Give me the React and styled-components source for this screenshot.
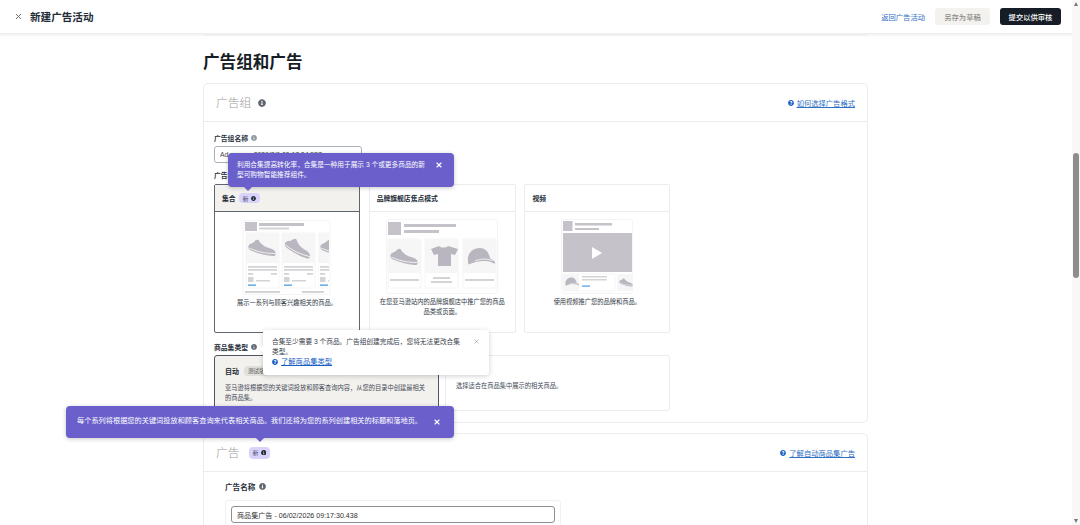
import React from "react"
import styled, { createGlobalStyle } from "styled-components"
import { FaInfoCircle, FaQuestionCircle } from "react-icons/fa"
import { X } from "lucide-react"

const GlobalStyle = createGlobalStyle`
  html, body {
    margin: 0;
    padding: 0;
    height: 100%;
    overflow: hidden;
    background: #fff;
  }
  body {
    font-family: "Liberation Sans", "Noto Sans CJK SC", sans-serif;
    color: #161d26;
  }
`

const Page = styled.div`
  position: relative;
  display: flex;
  width: 1080px;
  height: 525px;
  overflow: hidden;
`

const Content = styled.div`
  width: 1072px;
  height: 525px;
  overflow: hidden;
`

const Track = styled.div`
  position: relative;
  width: 8px;
  height: 525px;
  background: #f8f8f8;
`

const Thumb = styled.div`
  position: absolute;
  top: 153px;
  left: 1px;
  width: 6px;
  height: 125px;
  border-radius: 3px;
  background: #8d8d8d;
`

const Arrow = styled.div`
  position: absolute;
  left: 1.5px;
  ${({ $down }) => ($down ? "bottom: 2px;" : "top: 2px;")}
  width: 0;
  height: 0;
  border-left: 2.5px solid transparent;
  border-right: 2.5px solid transparent;
  ${({ $down }) =>
    $down ? "border-top: 4px solid #777;" : "border-bottom: 4px solid #777;"}
`

const Header = styled.header`
  display: flex;
  align-items: center;
  height: 33px;
  padding: 0 11px 0 14px;
  box-sizing: border-box;
  background: #fff;
`

const HeaderTitle = styled.h1`
  margin: 0 0 0 7px;
  font-size: 10.6px;
  font-weight: 700;
  color: #232b37;
`

const HeaderActions = styled.div`
  display: flex;
  align-items: center;
  margin-left: auto;
`

const BackLink = styled.a`
  margin-right: 10px;
  font-size: 7.3px;
  color: #2f6fc4;
`

const HeaderButton = styled.button`
  height: 17px;
  padding: 0;
  width: ${({ $w }) => $w}px;
  margin-left: ${({ $gap }) => $gap || 0}px;
  border: 0;
  border-radius: 3px;
  font-family: inherit;
  font-size: 7.3px;
  font-weight: 500;
  color: ${({ $dark }) => ($dark ? "#fff" : "#8c8c8c")};
  background: ${({ $dark }) => ($dark ? "#161d26" : "#f3f2ee")};
`

const Strip = styled.div`
  height: 3px;
  padding-left: 203px;
  background: #f5f5f5;
  border-top: 1px solid #eeeeee;
  box-sizing: border-box;
`

const StripCard = styled.div`
  width: 665px;
  height: 2px;
  background: #f0f0f0;
  border-radius: 0 0 3px 3px;
`

const Main = styled.main`
  width: 665px;
  margin-left: 203px;
`

const PageTitle = styled.h2`
  margin: 0;
  padding-top: 17px;
  margin-bottom: 10px;
  font-size: 16.6px;
  line-height: 20px;
  font-weight: 700;
`

const Card = styled.section`
  box-sizing: border-box;
  border: 1px solid #ececec;
  border-radius: 5px;
  margin-bottom: 10px;
  background: #fff;
`

const CardHead = styled.div`
  display: flex;
  align-items: center;
  height: 37px;
  padding: 0 12px;
  border-bottom: 1px solid #ececec;
`

const CardTitle = styled.h3`
  margin: 0 0 2px;
  font-size: 11.8px;
  font-weight: 300;
  color: #9a9a9a;
`

const HeadLink = styled.a`
  display: flex;
  align-items: center;
  gap: 3px;
  margin-left: auto;
  font-size: 7.3px;
  color: #2f6fc4;
  text-decoration: underline;
`

const InfoMark = styled(FaInfoCircle)`
  flex: none;
  width: ${({ $size }) => $size || 6}px;
  height: ${({ $size }) => $size || 6}px;
  margin-left: ${({ $gap }) => $gap || 3}px;
  color: ${({ $color }) => $color || "#5f6670"};
`

const HelpMark = styled(FaQuestionCircle)`
  width: 6px;
  height: 6px;
  color: #1a5fc4;
`

const CardBody = styled.div`
  padding: 11px 10px 10px;
`

const FieldLabel = styled.div`
  display: flex;
  align-items: center;
  height: 10px;
  font-size: 6.8px;
  font-weight: 700;
  color: #2a313c;
`

const GroupInput = styled.input`
  display: block;
  box-sizing: border-box;
  width: 148px;
  height: 17px;
  margin: 3px 0 7px;
  padding: 0 5px;
  border: 1px solid #aab0bb;
  border-radius: 3px;
  font-family: inherit;
  font-size: 6.8px;
  color: #444;
`

const FormatGrid = styled.div`
  display: grid;
  grid-template-columns: 146px 147px 146px;
  gap: 8.7px;
  height: 149px;
  margin: 4px 0 9px;
`

const FormatCard = styled.div`
  box-sizing: border-box;
  display: flex;
  flex-direction: column;
  border: 1px solid ${({ $on }) => ($on ? "#5f6670" : "#ececec")};
  border-radius: 2px;
`

const FormatHead = styled.div`
  display: flex;
  align-items: center;
  flex: none;
  height: 26px;
  padding: 0 7px;
  font-size: 6.8px;
  font-weight: 700;
  color: #232b37;
  background: ${({ $on }) => ($on ? "#f3f1ed" : "#fff")};
  border-bottom: 1px solid ${({ $on }) => ($on ? "#5f6670" : "#ececec")};
`

const NewBadge = styled.span`
  display: inline-flex;
  align-items: center;
  height: ${({ $large }) => ($large ? 12 : 10)}px;
  margin-left: ${({ $large }) => ($large ? 9 : 3)}px;
  padding: 0 4px;
  border-radius: 4px;
  font-size: 6px;
  font-weight: 400;
  color: #4b4d66;
  background: #d9d3fb;
`

const FormatBody = styled.div`
  display: flex;
  flex-direction: column;
  align-items: center;
  padding-top: ${({ $on }) => ($on ? 8 : 7)}px;
`

const Caption = styled.p`
  width: 130px;
  margin: 3px 0 0;
  font-size: 6.25px;
  line-height: 10px;
  font-weight: 400;
  text-align: center;
  color: #333b47;
`

const KindGrid = styled.div`
  display: grid;
  grid-template-columns: 225px 225px;
  grid-template-rows: 56px;
  gap: 6px;
  margin-top: 3px;
  margin-bottom: 1px;
`

const KindCard = styled.div`
  box-sizing: border-box;
  height: 56px;
  overflow: hidden;
  padding: ${({ $on }) => ($on ? "10px 10px" : "25px 10px")};
  border: 1px solid ${({ $on }) => ($on ? "#4f5661" : "#ececec")};
  border-radius: 3px;
  background: ${({ $on }) => ($on ? "#f3f1ed" : "#fff")};
`

const KindHead = styled.div`
  display: flex;
  align-items: center;
  height: 10px;
  font-size: 7px;
  font-weight: 700;
  color: #232b37;
`

const BetaBadge = styled.span`
  margin-left: 5px;
  padding: 0 4px;
  border-radius: 4px;
  font-size: 5.6px;
  line-height: 10px;
  font-weight: 400;
  color: #555;
  background: #e1e0dc;
`

const KindText = styled.p`
  margin: ${({ $on }) => ($on ? "7px 0 0" : 0)};
  font-size: 6.25px;
  line-height: 10px;
  color: #444b57;
`

const AdHeadRow = styled.div`
  display: flex;
  align-items: center;
`

const AdBody = styled.div`
  padding: 9px 21px 0;
`

const AdLabel = styled.div`
  display: flex;
  align-items: center;
  height: 11px;
  font-size: 7.6px;
  font-weight: 700;
  color: #2a313c;
`

const AdBox = styled.div`
  box-sizing: border-box;
  width: 336px;
  height: 40px;
  margin-top: 8px;
  padding: 5px;
  border: 1px solid #f0f0f0;
  border-radius: 3px;
`

const AdInput = styled.input`
  display: block;
  box-sizing: border-box;
  width: 100%;
  height: 17px;
  padding: 0 5px;
  border: 1px solid #8f8f8f;
  border-radius: 3px;
  font-family: inherit;
  font-size: 7.1px;
  color: #333;
`

/* floating tips sit over the form at their own spot */
const Tip = styled.div`
  position: absolute;
  left: ${({ $x }) => $x}px;
  top: ${({ $y }) => $y}px;
  width: ${({ $w }) => $w}px;
  height: ${({ $h }) => $h}px;
  box-sizing: border-box;
  padding: ${({ $pad }) => $pad};
  border-radius: 4px;
  font-size: ${({ $font }) => $font}px;
  line-height: 10px;
  color: #fff;
  background: #6a5fcb;
  box-shadow: 0 1px 4px rgba(0, 0, 0, 0.22);
`

const TipArrow = styled.div`
  position: absolute;
  left: ${({ $x }) => $x}px;
  bottom: -4px;
  width: 0;
  height: 0;
  border-left: 4px solid transparent;
  border-right: 4px solid transparent;
  border-top: 4px solid #6a5fcb;
`

const TipClose = styled(X)`
  position: absolute;
  right: ${({ $r }) => $r}px;
  top: ${({ $t }) => $t}px;
  width: 8px;
  height: 8px;
  stroke-width: 3.4;
  color: #fff;
`

const Popover = styled.div`
  position: absolute;
  left: 263px;
  top: 330px;
  width: 226px;
  height: 45px;
  box-sizing: border-box;
  padding: 6.5px 24px 0 9px;
  border-radius: 3px;
  font-size: 6.7px;
  line-height: 10px;
  color: #3a424e;
  background: #fff;
  box-shadow: 0 1px 5px rgba(0, 0, 0, 0.2);

  &::before {
    content: "";
    position: absolute;
    left: -4px;
    top: 15px;
    border-top: 4px solid transparent;
    border-bottom: 4px solid transparent;
    border-right: 4px solid #fff;
  }
`

const PopClose = styled(X)`
  position: absolute;
  right: 9px;
  top: 8px;
  width: 7px;
  height: 7px;
  color: #8f96a0;
`

const PopLink = styled.a`
  display: flex;
  align-items: center;
  gap: 3px;
  font-size: 7.3px;
  color: #1a5fc4;

  span {
    text-decoration: underline;
  }
`

const GREY = "#c5c2ca"
const LINE = "#d4d3d6"
const SHAPE = "#b9b6bf"

const Shoe = ({ x, y, s = 1, flip }) => (
  <g transform={`translate(${x} ${y}) scale(${s}) ${flip ? "rotate(14 14 9)" : ""}`}>
    <path
      d="M0.500 7 C1.500 4 4 5 6 3 C7 1.500 9 0.500 10.500 1 C12 4 15 6.500 18 8 C22 9.500 26.500 10 27.500 13.500 C28 16 27 17.500 24.500 17 C17 16.500 9 14 3 11.500 C1 10.500 0 9 0.500 7 Z"
      fill={SHAPE}
    />
    <path d="M1.500 9 C8 12.500 17 14.500 27.500 14.500" stroke="#f6f6f6" strokeWidth="0.9" fill="none" />
  </g>
)

const Stars = ({ x, y }) => (
  <g fill="#f39a1d">
    {[0, 1, 2, 3, 4].map((i) => (
      <circle key={i} cx={x + 1 + i * 3} cy={y + 1} r="1.200" />
    ))}
  </g>
)

const ProductCard = ({ x, flip }) => (
  <g>
    <rect x={x} y="13" width="33" height="55" rx="1" fill="#fff" stroke="#efefef" strokeWidth="0.6" />
    <rect x={x} y="13" width="33" height="30" fill="#f6f6f6" />
    <Shoe x={x + 2} y="19" flip={flip} />
    <rect x={x + 2} y="46" width="29" height="1.800" fill={LINE} />
    <rect x={x + 2} y="49" width="29" height="1.800" fill={LINE} />
    <rect x={x + 2} y="53" width="5" height="1.800" fill={LINE} />
    <Stars x={x + 8} y="53" />
    <rect x={x + 25} y="53" width="6" height="1.800" fill={LINE} />
    <rect x={x + 2} y="57" width="5.500" height="5" fill={LINE} />
    <rect x={x + 10} y="60" width="14" height="1.500" fill={LINE} />
    <rect x={x + 2} y="64.500" width="8" height="1.300" fill="#4b9be8" />
  </g>
)

const CollectionArt = () => (
  <svg width="90" height="75" viewBox="0 0 90 75">
    <rect x="1" y="0.500" width="87" height="74" rx="2" fill="#fff" stroke="#efefef" strokeWidth="0.7" />
    <rect x="3" y="2" width="12" height="9" fill={GREY} />
    <rect x="17" y="3" width="45" height="3" fill={GREY} />
    <rect x="17" y="7.500" width="30" height="2" fill={LINE} />
    <ProductCard x={4} />
    <ProductCard x={40} flip />
    <svg x="76" y="0" width="11" height="75" viewBox="76 0 11 75">
      <ProductCard x={76} />
    </svg>
    <rect x="3" y="71" width="35" height="2" fill={LINE} />
    <rect x="60" y="71" width="22" height="2" fill={LINE} />
  </svg>
)

const StoreCard = ({ x, lines, children }) => (
  <g>
    <rect x={x} y="20" width="33" height="49" rx="1" fill="#fff" stroke="#efefef" strokeWidth="0.6" />
    <rect x={x} y="20" width="33" height="34" fill="#f6f6f6" />
    {children}
    {lines === 2 ? (
      <>
        <rect x={x + 8} y="58" width="17" height="2" fill={LINE} />
        <rect x={x + 6} y="62" width="21" height="2" fill={LINE} />
      </>
    ) : (
      <rect x={x + 2} y="60" width="29" height="2" fill={LINE} />
    )}
  </g>
)

const Cap = ({ x, y, s = 1 }) => (
  <g transform={`translate(${x} ${y}) scale(${s})`}>
    <path
      d="M1 14 C0 6 6 1 13 1 C19 1 22 6 23 11 L28 15 C28.500 17 27 17 25 15.500 C18 13 9 14 2 17.500 C1 17 1 15.500 1 14 Z"
      fill={SHAPE}
    />
    <path d="M8 14 C14 11.500 20 11.500 25 13.500" stroke="#f6f6f6" strokeWidth="0.9" fill="none" />
  </g>
)

const StoreArt = () => (
  <svg width="112" height="75" viewBox="0 0 112 75">
    <rect x="0.500" y="0.500" width="111" height="74" rx="2" fill="#fff" stroke="#efefef" strokeWidth="0.7" />
    <rect x="2" y="3" width="13" height="13" fill={GREY} />
    <rect x="18" y="5" width="52" height="3" fill={GREY} />
    <rect x="18" y="11" width="35" height="3" fill={GREY} />
    <StoreCard x={2}>
      <Shoe x={4} y="29" />
    </StoreCard>
    <StoreCard x={39} lines={2}>
      <path
        d="M45 30 L53 27 C55 29 60 29 62 27 L72 30 L69 36 L65 35 L65 47 L52 47 L52 35 L48 36 Z"
        fill={SHAPE}
      />
    </StoreCard>
    <StoreCard x={77}>
      <Cap x={81} y="28" />
    </StoreCard>
  </svg>
)

const VideoArt = () => (
  <svg width="72" height="75" viewBox="0 0 72 75">
    <rect x="0.400" y="0.500" width="71" height="74" rx="2" fill="#fff" stroke="#efefef" strokeWidth="0.7" />
    <rect x="2" y="2" width="9.500" height="10" fill={GREY} />
    <rect x="14" y="4" width="37" height="2.500" fill={GREY} />
    <rect x="14" y="9" width="24" height="2" fill={GREY} />
    <rect x="2" y="14" width="69" height="39" fill={GREY} />
    <path d="M31 28 L41 34 L31 40 Z" fill="#fff" />
    <rect x="2" y="55" width="52" height="17" rx="1" fill="#fff" stroke="#efefef" strokeWidth="0.6" />
    <rect x="2" y="55" width="16" height="17" fill="#f6f6f6" />
    <Cap x={4} y="58" s={0.5} />
    <rect x="21" y="57" width="25" height="1.500" fill={LINE} />
    <rect x="21" y="60" width="25" height="1.500" fill={LINE} />
    <Stars x={25} y="63" />
    <rect x="21" y="66.500" width="8" height="1.200" fill="#4b9be8" />
    <rect x="56" y="55" width="16" height="17" fill="#f6f6f6" />
    <Shoe x={58} y="59" s={0.5} />
  </svg>
)

export default function App() {
  return (
    <Page>
      <GlobalStyle />
      <Content>
        <Header>
          <X size={9} strokeWidth={2.5} color="#5f6670" />
          <HeaderTitle>新建广告活动</HeaderTitle>
          <HeaderActions>
            <BackLink>返回广告活动</BackLink>
            <HeaderButton $w={55}>另存为草稿</HeaderButton>
            <HeaderButton $w={61} $gap={10} $dark>
              提交以供审核
            </HeaderButton>
          </HeaderActions>
        </Header>
        <Strip>
          <StripCard />
        </Strip>
        <Main>
          <PageTitle>广告组和广告</PageTitle>

          <Card>
            <CardHead>
              <CardTitle>广告组</CardTitle>
              <InfoMark $size={8} $gap={7} />
              <HeadLink>
                <HelpMark />
                如何选择广告格式
              </HeadLink>
            </CardHead>
            <CardBody>
              <FieldLabel>
                广告组名称
                <InfoMark $color="#8f96a0" />
              </FieldLabel>
              <GroupInput readOnly value="Ad group - 2026/2/6 09:17:34.587" />
              <FieldLabel>广告格式</FieldLabel>
              <FormatGrid>
                <FormatCard $on>
                  <FormatHead $on>
                    集合
                    <NewBadge>
                      新
                      <InfoMark $color="#232b37" $size={5} $gap={2} />
                    </NewBadge>
                  </FormatHead>
                  <FormatBody $on>
                    <CollectionArt />
                    <Caption>展示一系列与顾客兴趣相关的商品。</Caption>
                  </FormatBody>
                </FormatCard>
                <FormatCard>
                  <FormatHead>品牌旗舰店焦点模式</FormatHead>
                  <FormatBody>
                    <StoreArt />
                    <Caption>在您亚马逊站内的品牌旗舰店中推广您的商品品类或页面。</Caption>
                  </FormatBody>
                </FormatCard>
                <FormatCard>
                  <FormatHead>视频</FormatHead>
                  <FormatBody>
                    <VideoArt />
                    <Caption>使用视频推广您的品牌和商品。</Caption>
                  </FormatBody>
                </FormatCard>
              </FormatGrid>
              <FieldLabel>
                商品集类型
                <InfoMark />
              </FieldLabel>
              <KindGrid>
                <KindCard $on>
                  <KindHead>
                    自动
                    <BetaBadge>测试版</BetaBadge>
                  </KindHead>
                  <KindText $on>
                    亚马逊将根据您的关键词投放和顾客查询内容，从您的目录中创建最相关的商品集。
                  </KindText>
                </KindCard>
                <KindCard>
                  <KindText>选择适合在商品集中展示的相关商品。</KindText>
                </KindCard>
              </KindGrid>
            </CardBody>
          </Card>

          <Card>
            <CardHead>
              <AdHeadRow>
                <CardTitle>广告</CardTitle>
                <NewBadge $large>
                  新
                  <InfoMark $color="#232b37" $size={5.5} $gap={2} />
                </NewBadge>
              </AdHeadRow>
              <HeadLink>
                <HelpMark />
                了解自动商品集广告
              </HeadLink>
            </CardHead>
            <AdBody>
              <AdLabel>
                广告名称
                <InfoMark $size={7} $gap={4} />
              </AdLabel>
              <AdBox>
                <AdInput readOnly value="商品集广告 - 06/02/2026 09:17:30.438" />
              </AdBox>
            </AdBody>
          </Card>
        </Main>
      </Content>
      <Track>
        <Arrow />
        <Thumb />
        <Arrow $down />
      </Track>

      <Tip $x={228} $y={153} $w={226} $h={34} $pad="7px 24px 0 9px" $font={6.7}>
        利用合集提高转化率，合集是一种用于展示 3 个或更多商品的新型可购物智能推荐组件。
        <TipClose $r={11} $t={8} />
        <TipArrow $x={16} />
      </Tip>

      <Popover>
        合集至少需要 3 个商品。广告组创建完成后，您将无法更改合集类型。
        <PopClose />
        <PopLink>
          <HelpMark />
          <span>了解商品集类型</span>
        </PopLink>
      </Popover>

      <Tip $x={66} $y={406} $w={388} $h={32} $pad="10px 28px 0 11px" $font={7.2}>
        每个系列将根据您的关键词投放和顾客查询来代表相关商品。我们还将为您的系列创建相关的标题和落地页。
        <TipClose $r={13} $t={12} />
        <TipArrow $x={190} />
      </Tip>
    </Page>
  )
}
